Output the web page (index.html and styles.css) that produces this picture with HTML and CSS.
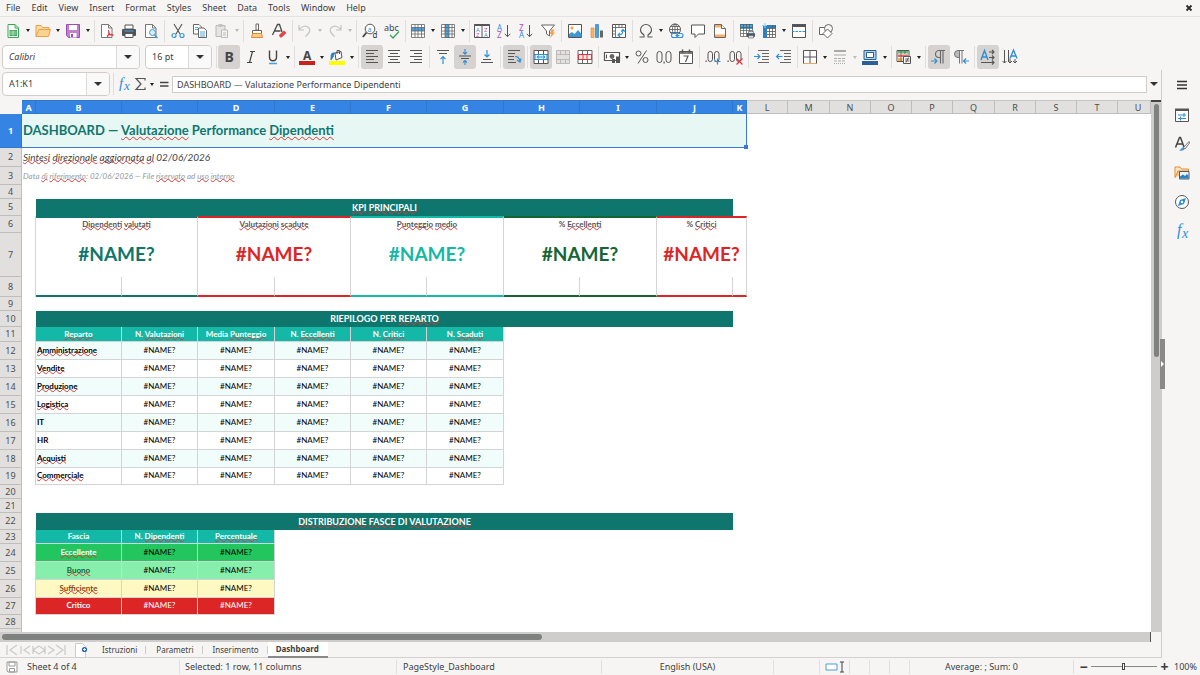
FILE: index.html
```html
<!DOCTYPE html>
<html lang="en">
<head>
<meta charset="utf-8">
<title>Dashboard</title>
<link rel="stylesheet" href="styles.css">
</head>
<body>
<nav class="menubar">
<button>File</button><button>Edit</button><button>View</button><button>Insert</button><button>Format</button><button>Styles</button><button>Sheet</button><button>Data</button><button>Tools</button><button>Window</button><button>Help</button>
<button class="close" aria-label="Close"><svg class="x" viewBox="0 0 8 8"><path d="M1.500 1.500l5 5M6.500 1.500l-5 5" stroke="#2b2b2b" stroke-width="1.800"/></svg></button>
</nav>

<div class="toolbar">
<button class="tb" aria-label="New"><svg viewBox="0 0 16 16"><path d="M3 1.500h7l3.500 3.500v9.500H3z" fill="#fff" stroke="#3aa655"/><path d="M10 1.500v3.500h3.500" fill="none" stroke="#3aa655"/><path d="M4.500 7h7.500v6H4.500z" fill="#43a85a"/><path d="M5 9h6.500M5 11h6.500M8 7.500v5" stroke="#d6f0dc" stroke-width=".7"/></svg></button><button class="dd" aria-label="New options"></button>
<button class="tb" aria-label="Open"><svg viewBox="0 0 16 16"><path d="M1 13.500V2.500h5l1.500 2H14v2" fill="#fbdba4" stroke="#e9a04a"/><path d="M1 13.500L4 6.500h11.500l-2 7z" fill="#fbd38f" stroke="#e9a04a"/></svg></button><button class="dd" aria-label="Open options"></button>
<button class="tb" aria-label="Save"><svg viewBox="0 0 16 16"><path d="M1.500 1.500h13v13H3.500l-2-2z" fill="#c27fd0" stroke="#9a4fae"/><path d="M4 2h8v5H4zM5 10h6.500v4.500H5z" fill="#fff"/><path d="M6 11h2v3H6z" fill="#9a4fae"/></svg></button><button class="dd" aria-label="Save options"></button>
<i class="sep tight"></i>
<button class="tb" aria-label="Export as PDF"><svg viewBox="0 0 16 16"><path d="M2.500 1.500h7l3.500 3.500v9.500H2.500z" fill="#fff" stroke="#777"/><path d="M9.500 1.500V5H13" fill="none" stroke="#777"/><path d="M9.500 7c1 3 .5 5-1.500 7.500M9.500 9c1 3 3 3.500 5 3M8 13c2-1.500 4-2 6.500-1" fill="none" stroke="#d9363e" stroke-width="1.100"/></svg></button>
<button class="tb" aria-label="Print"><svg viewBox="0 0 16 16"><path d="M4 2h8v4H4z" fill="#fff" stroke="#555"/><rect x="1" y="6" width="14" height="7" rx="1" fill="#515558"/><path d="M4 10.500h8v4H4z" fill="#fff" stroke="#555"/><path d="M3.500 8h9" stroke="#4d9fd8"/></svg></button>
<button class="tb" aria-label="Print preview"><svg viewBox="0 0 16 16"><path d="M2.500 1.500h7l3.500 3.500v9.500H2.500z" fill="#fff" stroke="#777"/><path d="M9.500 1.500V5H13" fill="none" stroke="#777"/><circle cx="9.500" cy="9.500" r="3" fill="#d9edfb" stroke="#3f97d6"/><path d="M11.500 12l3 3" stroke="#3f97d6" stroke-width="1.400"/></svg></button>
<i class="sep"></i>
<button class="tb" aria-label="Cut"><svg viewBox="0 0 16 16"><path d="M4 1l6 10M12 1L6 11" stroke="#555" stroke-width="1.100"/><circle cx="4" cy="12.500" r="2" fill="none" stroke="#3f97d6" stroke-width="1.200"/><circle cx="12" cy="12.500" r="2" fill="none" stroke="#3f97d6" stroke-width="1.200"/></svg></button>
<button class="tb" aria-label="Copy"><svg viewBox="0 0 16 16"><path d="M1.500 1.500h5.500l2.500 2.500v7h-8z" fill="#fff" stroke="#666"/><path d="M6.500 5h5.500l2.500 2.500v7h-8z" fill="#fff" stroke="#666"/><path d="M3 4.500h3M3 6.500h3M8 9h5M8 11h5M8 13h5" stroke="#5aa9e0"/></svg></button>
<button class="tb" aria-label="Paste"><svg viewBox="0 0 16 16"><path d="M2 2.500h9v11H2z" fill="#e5e4e2" stroke="#b9b8b6"/><path d="M4.500 1h4v3h-4z" fill="#c4c3c1"/><path d="M7.500 7h6v7.500h-6z" fill="#f4f4f3" stroke="#bbb"/><path d="M9 10h3M9 12h3" stroke="#bbb"/></svg></button><button class="dd off" aria-label="Paste options"></button>
<i class="sep"></i>
<button class="tb" aria-label="Clone formatting"><svg viewBox="0 0 16 16"><path d="M7 1h2.500v6H7z" fill="#fff" stroke="#666"/><path d="M3.500 7.500h9v3h-9z" fill="#fff" stroke="#666"/><path d="M3.500 10.500h9l1 4h-11z" fill="#f7c98a" stroke="#e28b2c"/></svg></button>
<button class="tb" aria-label="Clear formatting"><svg viewBox="0 0 16 16"><path d="M1.500 12L6.500 1.500h2L11 9M3.500 8h6" fill="none" stroke="#4a4a4a" stroke-width="1.300"/><path d="M8 12l5-4.500 2.500 2.500-5 4.500H9z" fill="#e0444c"/></svg></button>
<i class="sep tight"></i>
<button class="tb" aria-label="Undo"><svg viewBox="0 0 16 16"><path d="M2 2v5h5M2.500 6.500C5 3 9 2 11.500 4.500s1.500 5-3 9" fill="none" stroke="#c4c3c1" stroke-width="1.200"/></svg></button><button class="dd off" aria-label="Undo list"></button>
<button class="tb" aria-label="Redo"><svg viewBox="0 0 16 16"><path d="M14 2v5H9M13.500 6.500C11 3 7 2 4.500 4.500s-1.500 5 3 9" fill="none" stroke="#c4c3c1" stroke-width="1.200"/></svg></button><button class="dd off" aria-label="Redo list"></button>
<i class="sep"></i>
<button class="tb" aria-label="Find and replace"><svg viewBox="0 0 16 16"><circle cx="8" cy="6" r="4.800" fill="#fff" stroke="#555"/><path d="M4.500 9.500L.8 14" stroke="#444" stroke-width="1.800"/><text x="5.500" y="8.500" font-size="7" fill="#3f97d6">a</text><text x="10.500" y="15" font-size="8" fill="#333">d</text></svg></button>
<button class="tb" aria-label="Spelling"><svg viewBox="0 0 16 16"><text x="0" y="8" font-size="9" fill="#444">abc</text><path d="M6 12l3 3 6-6.500" fill="none" stroke="#3aa655" stroke-width="1.300"/></svg></button>
<i class="sep tight"></i>
<button class="tb" aria-label="Row"><svg viewBox="0 0 16 16"><path d="M1.500 1.500h13v13h-13z" fill="#fff"/><path d="M1 4.500h14v3.500H1z" fill="#4aa3df"/><path d="M1.500 1.500h13v13h-13zM1.500 4.500h13M1.500 8h13M1.500 11h13M5 1.500v13M8 1.500v13M11.500 1.500v13" fill="none" stroke="#666" stroke-width=".8"/></svg></button><button class="dd" aria-label="Row options"></button>
<button class="tb" aria-label="Column"><svg viewBox="0 0 16 16"><path d="M1.500 1.500h13v13h-13z" fill="#fff"/><path d="M5 1h4v14H5z" fill="#4aa3df"/><path d="M1.500 1.500h13v13h-13zM1.500 4.500h13M1.500 8h13M1.500 11h13M5 1.500v13M9 1.500v13M12 1.500v13" fill="none" stroke="#666" stroke-width=".8"/></svg></button><button class="dd" aria-label="Column options"></button>
<i class="sep tight"></i>
<button class="tb" aria-label="Sort"><svg viewBox="0 0 16 16"><path d="M.5 1.500h15v13H.5z" fill="#fff" stroke="#555"/><path d="M.5 1h15v2H.5zM7.500 3h1v11h-1z" fill="#555"/><text x="2" y="8.500" font-size="6" fill="#2e8fd8">A</text><text x="2" y="14" font-size="6" fill="#b04ec0">Z</text><text x="10" y="8.500" font-size="6" fill="#b04ec0">Z</text><text x="10" y="14" font-size="6" fill="#2e8fd8">A</text></svg></button>
<button class="tb" aria-label="Sort ascending"><svg viewBox="0 0 16 16"><text x="1" y="7.500" font-size="8" fill="#2e8fd8">A</text><text x="1" y="15" font-size="8" fill="#b04ec0">Z</text><path d="M11.500 2v11.500M8.800 10.800l2.700 2.900 2.700-2.900" fill="none" stroke="#555"/></svg></button>
<button class="tb" aria-label="Sort descending"><svg viewBox="0 0 16 16"><text x="1" y="7.500" font-size="8" fill="#b04ec0">Z</text><text x="1" y="15" font-size="8" fill="#2e8fd8">A</text><path d="M11.500 2v11.500M8.800 10.800l2.700 2.900 2.700-2.900" fill="none" stroke="#555"/></svg></button>
<button class="tb" aria-label="AutoFilter"><svg viewBox="0 0 16 16"><path d="M1.500 2h13L9.500 8v5l-3-2V8z" fill="#fff" stroke="#666"/><path d="M11.500 6.500h3l-1.500 3h2l-5 6 1.500-4.500H9.500z" fill="#f3a24c"/></svg></button>
<i class="sep"></i>
<button class="tb" aria-label="Image"><svg viewBox="0 0 16 16"><path d="M1.500 1.500h13v13h-13z" fill="#fff" stroke="#555"/><circle cx="5" cy="5" r="1.500" fill="#f3a24c"/><path d="M2 14v-3l3-2 2.500 2L11 7l3.500 4v3z" fill="#3f97d6"/></svg></button>
<button class="tb" aria-label="Chart"><svg viewBox="0 0 16 16"><path d="M2 5h3v9.500H2z" fill="#f7b76b" stroke="#e28b2c" stroke-width=".7"/><path d="M6.500 1.500h3v13h-3z" fill="#4aa3df" stroke="#2e7fc0" stroke-width=".7"/><path d="M11 7.500h3v7h-3z" fill="#666"/></svg></button>
<button class="tb" aria-label="Pivot table"><svg viewBox="0 0 16 16"><path d="M1.500 1.500h13v13h-13z" fill="#fff" stroke="#555"/><path d="M1.500 4.500h13M4.500 1.500v13M8 1.500v3M11 1.500v3M1.500 8h3M1.500 11h3" stroke="#666" stroke-width=".9"/><path d="M7 12c4 0 5-1 5-5.500M10 8.500l2-2 2 2M9 10l-2 2 2 2" fill="none" stroke="#2e8fd8" stroke-width="1.100"/></svg></button>
<i class="sep"></i>
<button class="tb" aria-label="Special character"><svg viewBox="0 0 16 16"><path d="M1.500 14h4.500v-2C3.500 10.500 2.500 9 2.500 7a5.500 5.500 0 0 1 11 0c0 2-1 3.500-3.500 5v2h4.500" fill="none" stroke="#555" stroke-width="1.100"/></svg></button><button class="dd" aria-label="Special character options"></button>
<button class="tb" aria-label="Hyperlink"><svg viewBox="0 0 16 16"><circle cx="7" cy="6.500" r="5.500" fill="#fff" stroke="#555"/><path d="M1.500 6.500h11M7 1v11M2.500 3.500h9M2.500 9.500h9" stroke="#555" stroke-width=".8"/><ellipse cx="7" cy="6.500" rx="2.600" ry="5.500" fill="none" stroke="#555" stroke-width=".8"/><rect x="3.500" y="10.500" width="6" height="4" rx="2" fill="#fff" stroke="#2e8fd8" stroke-width="1.100"/><rect x="9" y="10.500" width="6" height="4" rx="2" fill="#fff" stroke="#2e8fd8" stroke-width="1.100"/><path d="M7.500 12.500h4" stroke="#2e8fd8"/></svg></button>
<button class="tb" aria-label="Comment"><svg viewBox="0 0 16 16"><path d="M1.500 2h13v9H8.500L5 14.500V11H1.500z" fill="#fff" stroke="#555"/></svg></button>
<button class="tb" aria-label="Headers and footers"><svg viewBox="0 0 16 16"><path d="M2.500 1.500h7l4 4v9h-11z" fill="#fff" stroke="#666"/><path d="M3 2h6.500v2.500H3zM3 11.500h10V14H3z" fill="#f3b065"/><path d="M9.500 1.500v4h4" fill="#fff" stroke="#666"/></svg></button>
<i class="sep"></i>
<button class="tb" aria-label="Print area"><svg viewBox="0 0 16 16"><path d="M1.500 1.500h12v12h-12z" fill="#fff"/><path d="M1 1h13v5H1z" fill="#4aa3df"/><path d="M1.500 1.500h12v12h-12zM1.500 4.500h12M1.500 7.500h12M1.500 10.500h12M4.500 1.500v12M7.500 1.500v12M10.500 1.500v12" fill="none" stroke="#555" stroke-width=".7"/><rect x="8" y="10" width="8" height="4" rx="1" fill="#50565c"/><path d="M9.500 8.500h5v2h-5zM9.500 12.500h5v2.500h-5z" fill="#cfe6f7" stroke="#555" stroke-width=".6"/></svg></button>
<button class="tb" aria-label="Freeze"><svg viewBox="0 0 16 16"><path d="M2.500 2.500h12v12h-12z" fill="#fff"/><path d="M2 2h13v3H2zM2 2h4v13H2z" fill="#2e7fc0"/><path d="M6 5.500h8.500M6 8.500h8.500M6 11.500h8.500M6 14.500h8.500M8.500 5v9.500M11.500 2.500v12M14.500 2.500v12" stroke="#555" stroke-width=".8"/><path d="M4 0v5M1 2.500h5" stroke="#8fd0f7" stroke-width="1"/></svg></button><button class="dd" aria-label="Freeze options"></button>
<button class="tb" aria-label="Split window"><svg viewBox="0 0 16 16"><path d="M1.500 1.500h13v13h-13z" fill="#fff" stroke="#555"/><path d="M1 1h14v3H1z" fill="#555"/><path d="M1 8.500h14" stroke="#2e8fd8" stroke-dasharray="2.500 1"/></svg></button>
<i class="sep"></i>
<button class="tb" aria-label="Draw functions"><svg viewBox="0 0 16 16"><path d="M1.500 4.500h7v7h-7z" fill="#fff" stroke="#666"/><circle cx="10.500" cy="5.500" r="4" fill="#f6f5f4" stroke="#666"/><path d="M9.500 6l4.500 4.500-4.500 4.500L5 10.500z" fill="#fff" stroke="#666"/></svg></button>
</div>

<div class="toolbar format">
<div class="combo font"><input class="ital" aria-label="Font name" value="Calibri"><button class="drop" aria-label="Font list"></button></div>
<div class="combo size"><input aria-label="Font size" value="16 pt"><button class="drop" aria-label="Size list"></button></div>
<i class="sep tight"></i>
<button class="tb on" aria-label="Bold"><svg viewBox="0 0 16 16"><text x="3.500" y="13" font-size="14" font-weight="bold" fill="#444">B</text></svg></button>
<button class="tb" aria-label="Italic"><svg viewBox="0 0 16 16"><path d="M7 2.500h5M4 13.500h5M9.500 2.500l-3 11" stroke="#444" stroke-width="1.200"/></svg></button>
<button class="tb" aria-label="Underline"><svg viewBox="0 0 16 16"><path d="M4.500 1.500v6.500c0 5 7 5 7 0V1.500" fill="none" stroke="#444" stroke-width="1.400"/><path d="M4 14.500h8" stroke="#4aa3df" stroke-width="1.500"/></svg></button><button class="dd" aria-label="Underline options"></button>
<i class="sep tight"></i>
<button class="tb" aria-label="Font color"><svg viewBox="0 0 16 16"><text x="4" y="11" font-size="12" font-weight="bold" fill="#444">A</text><path d="M0 12h16v4H0z" fill="#c9211e"/></svg></button><button class="dd" aria-label="Font color options"></button>
<button class="tb" aria-label="Background color"><svg viewBox="0 0 16 16"><path d="M6 4l6-1.500 1 6-6 2.500z" fill="#fff" stroke="#555"/><path d="M8 5V1.500h2.500V5" fill="none" stroke="#555"/><path d="M6 4H3.500C2 5 2 7 2 11l2.500-4" fill="#2e7fc0" stroke="#2e7fc0"/><path d="M0 12h16v4H0z" fill="#ff0"/></svg></button><button class="dd" aria-label="Background color options"></button>
<i class="sep"></i>
<button class="tb on" aria-label="Align left"><svg viewBox="0 0 16 16"><path d="M2 1.500h12M2 4.500h8M2 7.500h12M2 10.500h8M2 13.500h12" stroke="#555"/></svg></button>
<button class="tb" aria-label="Center"><svg viewBox="0 0 16 16"><path d="M2 1.500h12M4 4.500h8M2 7.500h12M4 10.500h8M2 13.500h12" stroke="#555"/></svg></button>
<button class="tb" aria-label="Align right"><svg viewBox="0 0 16 16"><path d="M2 1.500h12M6 4.500h8M2 7.500h12M6 10.500h8M2 13.500h12" stroke="#555"/></svg></button>
<i class="sep"></i>
<button class="tb" aria-label="Align top"><svg viewBox="0 0 16 16"><path d="M2 1.500h12M4 4.500h8" stroke="#555"/><path d="M8 15V8M5.500 10.200L8 7.700l2.500 2.500" fill="none" stroke="#2e8fd8" stroke-width="1.200"/></svg></button>
<button class="tb on" aria-label="Center vertically"><svg viewBox="0 0 16 16"><path d="M2 7h12M4 9.500h8" stroke="#555"/><path d="M8 0v5M6 3.200l2 2 2-2M8 16v-4.500M6 13.500l2-2 2 2" fill="none" stroke="#2e8fd8" stroke-width="1.100"/></svg></button>
<button class="tb" aria-label="Align bottom"><svg viewBox="0 0 16 16"><path d="M4 10.500h8M2 13.500h12" stroke="#555"/><path d="M8 1v7M5.500 5.500L8 8l2.500-2.500" fill="none" stroke="#2e8fd8" stroke-width="1.200"/></svg></button>
<i class="sep"></i>
<button class="tb on" aria-label="Wrap text"><svg viewBox="0 0 16 16"><path d="M2 1.500h12M2 4.500h7M2 7.500h6M2 10.500h6M2 13.500h8" stroke="#555"/><path d="M9 7.500c3 0 4 1 5 5M11 11l3 2 1-3.500" fill="none" stroke="#2e8fd8" stroke-width="1.200"/></svg></button>
<i class="sep"></i>
<button class="tb on" aria-label="Merge and center"><svg viewBox="0 0 16 16"><path d="M1 1.500h14v13H1zM1 5.500h14M1 10.500h14M5.500 1.500v4M10.500 1.500v4M5.500 10.500v4M10.500 10.500v4" fill="#fff" stroke="#555"/><path d="M2 5.500h12v5H2z" fill="#e3f2fc" stroke="#2e8fd8"/><path d="M4 8h8M6 6.500L4 8l2 1.500M10 6.500L12 8l-2 1.500" fill="none" stroke="#2e8fd8"/></svg></button>
<button class="tb" aria-label="Merge cells"><svg viewBox="0 0 16 16"><path d="M1.500 1.500h13v13h-13zM1.500 5.500h13M1.500 10.500h13M5.500 1.500v4M10.500 1.500v4M5.500 10.500v4M10.500 10.500v4" fill="#e2e1df" stroke="#bbbab8"/></svg></button>
<button class="tb" aria-label="Unmerge cells"><svg viewBox="0 0 16 16"><path d="M1 1.500h14v13H1zM1 5.500h14M1 10.500h14M5.500 1.500v4M10.500 1.500v4M5.500 10.500v4M10.500 10.500v4" fill="#fff" stroke="#666"/><path d="M1.500 5.500h13v5h-13zM6 5.500v5M10 5.500v5" fill="#fdeaea" stroke="#d9363e"/></svg></button>
<i class="sep"></i>
<button class="tb" aria-label="Currency"><svg viewBox="0 0 16 16"><path d="M.5 3.500h15v8H.5z" fill="#fff" stroke="#555" stroke-width="1.200"/><circle cx="8" cy="7.500" r="2.400" fill="#666"/><path d="M8 10h3v4H8zM12 7.500h4V14h-4z" fill="#555"/><path d="M2.500 5.500v4" stroke="#555"/></svg></button><button class="dd" aria-label="Currency options"></button>
<button class="tb" aria-label="Percent"><svg viewBox="0 0 16 16"><circle cx="4.500" cy="4.500" r="2.500" fill="none" stroke="#555"/><circle cx="11.500" cy="11" r="2.500" fill="none" stroke="#555"/><path d="M12.500 1.500L4 14.500" stroke="#555"/></svg></button>
<button class="tb" aria-label="Number"><svg viewBox="0 0 16 16"><rect x="1" y="2.500" width="5" height="11" rx="2.500" fill="none" stroke="#555"/><rect x="10" y="2.500" width="5" height="11" rx="2.500" fill="none" stroke="#555"/><path d="M7.500 12.500h1.200v2H7.500z" fill="#555"/></svg></button>
<button class="tb" aria-label="Date"><svg viewBox="0 0 16 16"><path d="M1.500 2.500h13v12h-13z" fill="#fff" stroke="#555"/><path d="M1 4h14M4.500.5v3M11.500.5v3" stroke="#555" stroke-width="1.500"/><path d="M5.500 7H10l-2.500 6" fill="none" stroke="#555" stroke-width="1.200"/></svg></button>
<i class="sep"></i>
<button class="tb" aria-label="Add decimal place"><svg viewBox="0 0 16 16"><rect x="3" y="2.500" width="4.500" height="10" rx="2.200" fill="none" stroke="#555"/><rect x="9.500" y="2.500" width="4.500" height="10" rx="2.200" fill="none" stroke="#555"/><path d="M.5 11.500h1.200v1.500H.5z" fill="#555"/><path d="M9.500 12.500h6M12.500 9.500v6" stroke="#2e8fd8" stroke-width="1.200"/></svg></button>
<button class="tb" aria-label="Delete decimal place"><svg viewBox="0 0 16 16"><rect x="3" y="2.500" width="4.500" height="10" rx="2.200" fill="none" stroke="#555"/><rect x="9.500" y="2.500" width="4.500" height="10" rx="2.200" fill="none" stroke="#555"/><path d="M.5 11.500h1.200v1.500H.5z" fill="#555"/><path d="M9.500 9.500l6 6M15.500 9.500l-6 6" stroke="#d9363e" stroke-width="1.200"/></svg></button>
<i class="sep"></i>
<button class="tb" aria-label="Increase indent"><svg viewBox="0 0 16 16"><path d="M4 1.500h11M8 4.500h7M8 7.500h7M8 10.500h7M4 13.500h11" stroke="#666"/><path d="M0 7.500h6M3.500 5L6 7.500 3.500 10" fill="none" stroke="#2e8fd8" stroke-width="1.100"/></svg></button>
<button class="tb" aria-label="Decrease indent"><svg viewBox="0 0 16 16"><path d="M4 1.500h11M8 4.500h7M8 7.500h7M8 10.500h7M4 13.500h11" stroke="#666"/><path d="M6.500 7.500h-6M3 5L.5 7.500 3 10" fill="none" stroke="#2e8fd8" stroke-width="1.100"/></svg></button>
<i class="sep tight"></i>
<button class="tb" aria-label="Borders"><svg viewBox="0 0 16 16"><path d="M1.500 1.500h13v13h-13z" fill="#fff" stroke="#555"/><path d="M2 8h12M8 2v12" stroke="#555"/><path d="M1.500 14.500h13" stroke="#e8a860"/></svg></button><button class="dd" aria-label="Border options"></button>
<button class="tb" aria-label="Border style"><svg viewBox="0 0 16 16"><path d="M2 2h12" stroke="#aaa" stroke-width="2"/><path d="M2 6h12" stroke="#aaa"/><path d="M2 9.500h12M2 12h12" stroke="#aaa" stroke-dasharray="3 1"/><path d="M2 14.500h12" stroke="#aaa" stroke-dasharray="1 1"/></svg></button><button class="dd off" aria-label="Border style options"></button>
<button class="tb" aria-label="Border color"><svg viewBox="0 0 16 16"><path d="M2 1.500h12v9H2z" fill="#a9d2ef" stroke="#2e5f8a"/><path d="M4.500 3.500h7v5h-7z" fill="#fff" stroke="#2e5f8a"/><path d="M0 12h16v4H0z" fill="#2a6099"/></svg></button><button class="dd" aria-label="Border color options"></button>
<i class="sep tight"></i>
<button class="tb" aria-label="Conditional formatting"><svg viewBox="0 0 16 16"><path d="M1 1.500h12v11H1z" fill="#fff" stroke="#555"/><path d="M1.500 2h11v2.500h-11z" fill="#65bd75"/><path d="M1.500 5.500h11V8h-11z" fill="#e66a6a"/><path d="M1.500 9h5v3h-5z" fill="#f3b065"/><path d="M5 2v10M9 2v3" stroke="#555" stroke-width=".7"/><path d="M7.500 7.500h7v7h-7z" fill="#fff" stroke="#555"/><path d="M9 10h4.500M9 12h4.500M12.500 8.500l-2.500 5" stroke="#444" stroke-width=".8"/></svg></button><button class="dd" aria-label="Conditional options"></button>
<i class="sep"></i>
<button class="tb on" aria-label="Left to right"><svg viewBox="0 0 16 16"><path d="M14 1.500H8a3.500 3.500 0 0 0 0 7h1.500M9.500 1.500v13M12 1.500v13" fill="none" stroke="#666" stroke-width="1.100"/><path d="M0 12h6M3.500 9.500L6 12l-2.500 2.500" fill="none" stroke="#2e8fd8" stroke-width="1.200"/></svg></button>
<button class="tb" aria-label="Right to left"><svg viewBox="0 0 16 16"><path d="M6.500 1.500H5a3.500 3.500 0 0 0 0 7h1.500z" fill="#bbb"/><path d="M11 1.500H5a3.500 3.500 0 0 0 0 7h1.500M6.500 1.500v13M9 1.500v13" fill="none" stroke="#777"/><path d="M16 12h-5.500M13 9.500L10.500 12l2.500 2.500" fill="none" stroke="#2e8fd8" stroke-width="1.200"/></svg></button>
<i class="sep"></i>
<button class="tb on" aria-label="Text left to right"><svg viewBox="0 0 16 16"><path d="M1 11L4.500 1.500 8 11M2.200 8h4.600" fill="none" stroke="#2e8fd8" stroke-width="1.400"/><path d="M9 3h5M12 1l2 2-2 2M9 8.500h5M12 6.500l2 2-2 2M1 13.500h13M12 11.500l2 2-2 2" fill="none" stroke="#555" stroke-width="1.100"/></svg></button>
<button class="tb" aria-label="Text top to bottom"><svg viewBox="0 0 16 16"><path d="M8 9.500L11.500 1 15 9.500M9.300 7h4.400" fill="none" stroke="#2e8fd8" stroke-width="1.400"/><path d="M2.500 1v13M.5 12l2 2 2-2M8 10v4M6 12l2 2 2-2M13 10v4M11 12l2 2 2-2M6.500 1v11" fill="none" stroke="#555"/></svg></button>
</div>

<main class="work">
<section class="book">
<div class="formula">
<div class="combo name"><input aria-label="Name box" value="A1:K1"><button class="drop" aria-label="Name list"></button></div>
<i class="sep"></i>
<button class="fb" aria-label="Function wizard"><svg viewBox="0 0 16 16"><text class="fx" x="2" y="12" font-size="15">f</text><text class="fx" x="7" y="14" font-size="13">x</text></svg></button>
<button class="fb sig" aria-label="Select function"><svg viewBox="0 0 16 16"><path d="M12 4.500v-2H3L8 8l-5 5.500h9v-2" fill="none" stroke="#555" stroke-width="1.200"/></svg></button><button class="dd" aria-label="Function options"></button>
<button class="fb eq" aria-label="Formula"><svg viewBox="0 0 16 16"><path d="M4 6.500h8.500M4 10h8.500" stroke="#444" stroke-width="1.500"/></svg></button>
<input class="line" aria-label="Input line" value="DASHBOARD — Valutazione Performance Dipendenti">
<button class="expand" aria-label="Expand formula bar"></button>
</div>
<div class="gridrow">
<div class="sheet">
<table>
<colgroup><col class="w22"><col class="w14"><col class="w86"><col class="w76"><col class="w77"><col class="w76"><col class="w76"><col class="w77"><col class="w76"><col class="w77"><col class="w76"><col class="w14"><col class="w41"><col class="w42"><col class="w41"><col class="w41"><col class="w41"><col class="w42"><col class="w41"><col class="w41"><col class="w41"><col></colgroup>
<thead><tr class="h14"><td class="corner"></td><th class="sel">A</th><th class="sel">B</th><th class="sel">C</th><th class="sel">D</th><th class="sel">E</th><th class="sel">F</th><th class="sel">G</th><th class="sel">H</th><th class="sel">I</th><th class="sel">J</th><th class="sel">K</th><th>L</th><th>M</th><th>N</th><th>O</th><th>P</th><th>Q</th><th>R</th><th>S</th><th>T</th><th class="cut">U</th></tr></thead>
<tbody>
<tr class="h34"><th class="sel">1</th><td colspan="11" class="title">DASHBOARD — <u>Valutazione</u> Performance <u>Dipendenti</u><span class="handle"></span></td></tr>
<tr class="h19"><th>2</th><td colspan="11" class="sub"><u>Sintesi</u> <u>direzionale</u> <u>aggiornata</u> <u>al</u> 02/06/2026</td></tr>
<tr class="h18"><th>3</th><td colspan="11" class="note">Data <u>di</u> <u>riferimento</u>: 02/06/2026 — File <u>riservato</u> ad <u>uso</u> <u>interno</u></td></tr>
<tr class="h14"><th>4</th></tr>
<tr class="h17"><th>5</th><td></td><td colspan="9" class="band"><u>KPI</u> <u>PRINCIPALI</u></td></tr>
<tr class="h17 lab"><th>6</th><td class="edge"></td><td colspan="2" class="k teal"><u>Dipendenti</u> <u>valutati</u></td><td colspan="2" class="k red"><u>Valutazioni</u> <u>scadute</u></td><td colspan="2" class="k aqua"><u>Punteggio</u> <u>medio</u></td><td colspan="2" class="k green">% <u>Eccellenti</u></td><td colspan="2" class="k red">% <u>Critici</u></td></tr>
<tr class="h44 big"><th>7</th><td class="edge"></td><td colspan="2" class="teal">#NAME?</td><td colspan="2" class="red">#NAME?</td><td colspan="2" class="aqua">#NAME?</td><td colspan="2" class="green">#NAME?</td><td colspan="2" class="red">#NAME?</td></tr>
<tr class="h20 foot"><th>8</th><td class="edge"></td><td class="teal"></td><td class="teal"></td><td class="red"></td><td class="red"></td><td class="aqua"></td><td class="aqua"></td><td class="green"></td><td class="green"></td><td class="red"></td><td class="red"></td></tr>
<tr class="h14"><th>9</th></tr>
<tr class="h16"><th>10</th><td></td><td colspan="9" class="band">RIEPILOGO PER <u>REPARTO</u></td></tr>
<tr class="h15 head"><th>11</th><td class="edge"></td><td><u>Reparto</u></td><td>N. <u>Valutazioni</u></td><td>Media <u>Punteggio</u></td><td>N. <u>Eccellenti</u></td><td>N. <u>Critici</u></td><td>N. <u>Scaduti</u></td></tr>
<tr class="h18 data tint"><th>12</th><td class="edge"></td><td><u>Amministrazione</u></td><td>#NAME?</td><td>#NAME?</td><td>#NAME?</td><td>#NAME?</td><td>#NAME?</td></tr>
<tr class="h18 data"><th>13</th><td class="edge"></td><td><u>Vendite</u></td><td>#NAME?</td><td>#NAME?</td><td>#NAME?</td><td>#NAME?</td><td>#NAME?</td></tr>
<tr class="h18 data tint"><th>14</th><td class="edge"></td><td><u>Produzione</u></td><td>#NAME?</td><td>#NAME?</td><td>#NAME?</td><td>#NAME?</td><td>#NAME?</td></tr>
<tr class="h18 data"><th>15</th><td class="edge"></td><td><u>Logistica</u></td><td>#NAME?</td><td>#NAME?</td><td>#NAME?</td><td>#NAME?</td><td>#NAME?</td></tr>
<tr class="h18 data tint"><th>16</th><td class="edge"></td><td>IT</td><td>#NAME?</td><td>#NAME?</td><td>#NAME?</td><td>#NAME?</td><td>#NAME?</td></tr>
<tr class="h18 data"><th>17</th><td class="edge"></td><td>HR</td><td>#NAME?</td><td>#NAME?</td><td>#NAME?</td><td>#NAME?</td><td>#NAME?</td></tr>
<tr class="h18 data tint"><th>18</th><td class="edge"></td><td><u>Acquisti</u></td><td>#NAME?</td><td>#NAME?</td><td>#NAME?</td><td>#NAME?</td><td>#NAME?</td></tr>
<tr class="h17 data"><th>19</th><td class="edge"></td><td><u>Commerciale</u></td><td>#NAME?</td><td>#NAME?</td><td>#NAME?</td><td>#NAME?</td><td>#NAME?</td></tr>
<tr class="h14"><th>20</th></tr>
<tr class="h14"><th>21</th></tr>
<tr class="h17"><th>22</th><td></td><td colspan="9" class="band"><u>DISTRIBUZIONE</u> <u>FASCE</u> DI <u>VALUTAZIONE</u></td></tr>
<tr class="h14 head"><th>23</th><td class="edge"></td><td>Fascia</td><td>N. <u>Dipendenti</u></td><td><u>Percentuale</u></td></tr>
<tr class="h18 tier best"><th>24</th><td class="edge"></td><td><u>Eccellente</u></td><td>#NAME?</td><td>#NAME?</td></tr>
<tr class="h18 tier good"><th>25</th><td class="edge"></td><td><u>Buono</u></td><td>#NAME?</td><td>#NAME?</td></tr>
<tr class="h18 tier fair"><th>26</th><td class="edge"></td><td><u>Sufficiente</u></td><td>#NAME?</td><td>#NAME?</td></tr>
<tr class="h17 tier poor"><th>27</th><td class="edge"></td><td>Critico</td><td>#NAME?</td><td>#NAME?</td></tr>
<tr class="h14"><th>28</th></tr>
<tr class="h14"><th></th></tr>
</tbody>
</table>
</div>
<div class="vbar"><div class="vthumb"></div></div>
</div>
<div class="hbar"><div class="hthumb"></div></div>
<div class="tabs">
<svg class="navs" viewBox="0 0 62 14"><path d="M2 2v10M12 2L5 7l7 5M16 3v8M25 3l-6 4 6 4M34 3l-6 4 6 4M28 3v8M34 3l6 4-6 4M40 3v8M43 3l6 4-6 4M51 2l7 5-7 5M60 2v10" fill="none" stroke="#cbcac8" stroke-width="1.200"/></svg>
<button class="add" aria-label="Add sheet"><svg viewBox="0 0 14 16"><path d="M1.500 1.500h7l3 3v11h-10z" fill="#fff" stroke="#ccc"/><circle cx="10.500" cy="7.500" r="2.600" fill="#2a66b8"/><path d="M9 7.500h3M10.500 6v3" stroke="#fff" stroke-width=".8"/></svg></button>
<button class="tab">Istruzioni</button><button class="tab">Parametri</button><button class="tab">Inserimento</button><button class="tab cur">Dashboard</button>
</div>
</section>
<aside class="side">
<button aria-label="Sidebar settings"><svg viewBox="0 0 16 16"><path d="M3 3.500h10M3 7h10M3 10.500h10" stroke="#333" stroke-width="1.400"/></svg></button>
<button aria-label="Properties"><svg viewBox="0 0 16 16"><path d="M1.500 2.500h13v12h-13z" fill="#fff" stroke="#555"/><path d="M1 1.500h14v2.500H1z" fill="#555"/><path d="M4 8h8M10 6v4M4 11.500h8M6.500 9.500v4" stroke="#2e8fd8"/></svg></button>
<button aria-label="Styles"><svg viewBox="0 0 16 16"><path d="M1.500 11.500L5.500 1.500h1L10 11M3 8h6" fill="none" stroke="#444" stroke-width="1.500"/><path d="M15 5.500l-5.500 6 1.500 1.500 4.500-6z" fill="#fff" stroke="#555" stroke-width=".8"/><path d="M9.500 11c2 1 1.500 4-4.500 4 2-1 2-3.500 4.500-4z" fill="#3f97d6"/></svg></button>
<button aria-label="Gallery"><svg viewBox="0 0 16 16"><path d="M1 12.500V2h5l1.500 2h7v3" fill="#fde6c4" stroke="#e58b35"/><path d="M1 12.500L4 6h11" fill="#f9c887" stroke="#e58b35"/><path d="M5.500 6.500h9.500v7.500H5.500z" fill="#e8f4fc" stroke="#4a5a68"/><path d="M6 13.500v-2l3-2 2 1.500L13 9l1.500 2v2.500z" fill="#2e7fc0"/></svg></button>
<button aria-label="Navigator"><svg viewBox="0 0 16 16"><circle cx="8" cy="8" r="6.500" fill="#fff" stroke="#555"/><path d="M12 4l-2 6-6 2 2-6z" fill="#2e8fd8"/><circle cx="8" cy="8" r="1.200" fill="#fff"/></svg></button>
<button aria-label="Functions"><svg viewBox="0 0 16 16"><text class="fx" x="3" y="12" font-size="16">f</text><text class="fx" x="8" y="15" font-size="14">x</text></svg></button>
<span class="grip"></span>
</aside>
</main>

<footer class="status">
<svg class="disk" viewBox="0 0 12 12"><path d="M1 1h10v10H2L1 10zM3 1h6v4H3zM3.500 7.500h5V11h-5z" fill="#fff" stroke="#999"/></svg>
<span class="s1">Sheet 4 of 4</span><span class="s2">Selected: 1 row, 11 columns</span><span class="s3">PageStyle_Dashboard</span><span class="s4">English (USA)</span><span class="s5"></span><span class="s6"><svg viewBox="0 0 20 12"><path d="M1 3h11v6H1z" fill="#fff" stroke="#4a9fd0"/><path d="M15 1h4M15 11h4M17 1v10" stroke="#444"/></svg></span><span class="s7"></span><span class="s7"></span><span class="s7"></span><span class="s8">Average: ; Sum: 0</span>
<div class="zoom"><button aria-label="Zoom out">−</button><input type="range" aria-label="Zoom" min="0" max="100" value="49"><button aria-label="Zoom in">+</button></div>
<button class="pct">100%</button>
</footer>
</body>
</html>
```
FILE: styles.css
```css
* { box-sizing: border-box; }
body {
  margin: 0;
  height: 100vh;
  display: flex;
  flex-direction: column;
  background: #f6f5f4;
  color: #3d3d3d;
  font: 9px/12px "Noto Sans", sans-serif;
  overflow: hidden;
}
button { border: 0; background: none; padding: 0; margin: 0; font: inherit; color: inherit; }
input { font: inherit; color: inherit; margin: 0; min-width: 0; }
svg { display: block; overflow: visible; }
svg text { font-family: "Noto Sans", sans-serif; }
svg .fx { font-family: "Liberation Serif", serif; font-style: italic; fill: #2e8fd8; }

.menubar { height: 17px; flex: none; display: flex; align-items: center; gap: 11px; padding: 0 7px 0 6px; border-bottom: 1px solid #e6e4e3; }
.close { margin-left: auto; }
.x { width: 8px; height: 8px; }

.toolbar { height: 27px; flex: none; display: flex; align-items: center; padding-left: 2px; }
.format { height: 26px; }
.tb { width: 22px; height: 24px; flex: none; display: flex; align-items: center; justify-content: center; border-radius: 3px; }
.tb svg, .fb svg, .side svg { width: 16px; height: 16px; }
.tb.on { background: #d5d2cf; }
.sep { width: 5px; height: 22px; flex: none; background: linear-gradient(#e0dedc, #e0dedc) center / 1px 100% no-repeat; }
.sep.tight { width: 4px; }
.dd, .drop, .expand { display: flex; align-items: center; justify-content: center; flex: none; }
.dd { width: 8px; height: 22px; }
.dd::after { content: ""; border: 2px solid transparent; border-top: 3px solid #222; border-bottom: 0; }
.dd.off::after { border-top-color: #bbb; }
.drop::after, .expand::after { content: ""; border: 4px solid transparent; border-top-color: #333; border-bottom: 0; }
.combo { display: flex; flex: none; height: 24px; border: 1px solid #d0cdca; border-radius: 4px; background: #fff; overflow: hidden; }
.combo input { flex: 1; border: 0; padding: 0 6px; background: none; outline: 0; }
.combo .drop { width: 23px; border-left: 1px solid #dcdad8; background: #faf9f9; }
.combo .ital { font-style: italic; }
.font { width: 138px; margin-right: 5px; }
.size { width: 67px; margin-right: 2px; }

.work { flex: 1; min-height: 0; display: flex; }
.book { flex: 1; min-width: 0; display: flex; flex-direction: column; border-right: 1px solid #cfcdcb; }
.formula { height: 30px; flex: none; display: flex; align-items: center; padding: 0 0 2px 2px; }
.name { width: 108px; margin-right: 1px; }
.fb { width: 18px; flex: none; display: flex; justify-content: center; }
.fb.sig { width: 14px; }
.fb.eq { width: 16px; }
.line { flex: 1; height: 17px; border: 1px solid #d0cdca; background: #fff; padding: 0 4px; outline: 0; }
.expand { width: 14px; height: 17px; }

.gridrow { flex: 1; min-height: 0; display: flex; }
.sheet { flex: 1; min-width: 0; background: #fff; overflow: hidden; }
table { width: 100%; table-layout: fixed; border-collapse: separate; border-spacing: 0; font-family: Lato, sans-serif; font-size: 8px; line-height: 11px; }
.w14 { width: 14px; } .w22 { width: 22px; } .w41 { width: 41px; } .w42 { width: 42px; }
.w76 { width: 76px; } .w77 { width: 77px; } .w86 { width: 86px; }
.h14 { height: 14px; } .h15 { height: 15px; } .h16 { height: 16px; } .h17 { height: 17px; }
.h18 { height: 18px; } .h19 { height: 19px; } .h20 { height: 20px; } .h34 { height: 34px; } .h44 { height: 44px; }
th, td { padding: 0; white-space: nowrap; }
th { font: 9px/12px "Noto Sans", sans-serif; color: #4d4d4d; background: #e1e0df; border-right: 1px solid #bfbebd; border-bottom: 1px solid #bfbebd; }
thead th { border-top: 1px solid #c6c5c4; line-height: 11px; }
th.sel { background: #3584e4; color: #fff; font-weight: bold; border-color: #2f78d0; }
.cut { padding-left: 8px; }
.corner { background: #f6f5f4; }
u { text-decoration: underline wavy #e03535 1px; text-decoration-skip-ink: none; text-underline-offset: -1px; }
.title { position: relative; padding: 0 0 2px 1px; font-size: 13px; line-height: 18px; font-weight: bold; color: #0f766e; background: #e6f7f4; border-right: 1px solid #3a7bd0; border-bottom: 1px solid #3a7bd0; }
.title u { text-underline-offset: 1px; }
.handle { position: absolute; right: -2px; bottom: -2px; width: 4px; height: 4px; background: #3a7bd0; }
.sub { padding: 0 0 1px 1px; font-size: 10px; font-style: italic; color: #444; }
.note { padding-left: 1px; font-size: 8px; font-style: italic; color: #999; }
.band { padding-bottom: 1px; background: #0f766e; color: #fff; font-weight: bold; font-size: 9px; line-height: 13px; text-align: center; }
.edge { border-right: 1px solid #d4d4d4; }
.teal { color: #0f766e; } .red { color: #dc2626; } .aqua { color: #14b8a6; } .green { color: #166534; }
.lab .k { padding-bottom: 2px; border-top: 2px solid currentColor; border-right: 1px solid #d4d4d4; text-align: center; font-weight: bold; }
.k { -webkit-text-fill-color: #555; }
.big td { padding-bottom: 3px; font-size: 19px; line-height: 24px; font-weight: bold; text-align: center; border-right: 1px solid #d4d4d4; }
.foot td { border-right: 1px solid #d4d4d4; }
.foot .teal, .foot .red, .foot .aqua, .foot .green { border-bottom: 2px solid currentColor; border-right-color: #d4d4d4; }
.head td:not(.edge) { background: #14b8a6; color: #fff; font-weight: bold; text-align: center; border-right: 1px solid #d4d4d4; border-bottom: 1px solid #d4d4d4; }
.data td:not(.edge), .tier td:not(.edge) { padding-bottom: 1px; text-align: center; color: #000; border-right: 1px solid #d4d4d4; border-bottom: 1px solid #d4d4d4; }
.data td.edge + td { text-align: left; font-weight: bold; padding-left: 1px; }
.tint td:not(.edge) { background: #f0fdfa; }
.tier td.edge + td { font-weight: bold; }
.best td:not(.edge) { background: #22c55e; }
.good td:not(.edge) { background: #86efac; }
.fair td:not(.edge) { background: #fef9c3; }
.poor td:not(.edge) { background: #dc2626; color: #fff; }
.best td.edge + td { color: #fff; }
.good td.edge + td { color: #166534; }
.fair td.edge + td { color: #92400e; }

.vbar { width: 10px; flex: none; background: #cecdcc; border-top: 2px solid #444; padding: 2px 2px 0 3px; }
.vthumb { height: 48%; border-radius: 3px; background: #7f8180; }
.hbar { height: 10px; flex: none; margin-right: 10px; background: #cecdcc; padding: 2px 0 0 2px; border-right: 1px solid #555; }
.hthumb { width: 47%; height: 6px; border-radius: 3px; background: #7f8180; }
.tabs { height: 16px; flex: none; display: flex; align-items: center; padding-left: 5px; border-bottom: 1px solid #d4d2d0; font-size: 8px; }
.navs { width: 62px; height: 14px; flex: none; }
.add { width: 14px; margin: 0 4px 0 7px; }
.add svg { width: 14px; height: 16px; }
.tab { height: 16px; padding: 0 9px 0 10px; }
.tab:not(.cur) { background: linear-gradient(#cfcdcb, #cfcdcb) right / 1px 8px no-repeat; }
.tab.cur { background: #fff; font-weight: bold; border-bottom: 2px solid #8a8a8a; padding: 0 9px 0 8px; }

.side { position: relative; width: 38px; flex: none; display: flex; flex-direction: column; align-items: center; gap: 13px; padding: 8px 0 0 1px; }
.grip { position: absolute; left: -2px; top: 50%; width: 5px; height: 50px; margin-top: -25px; background: #8a8988; }
.grip::after { content: ""; position: absolute; left: 1px; top: 22px; border: 3px solid transparent; border-left-color: #fff; border-right: 0; }

.status { height: 17px; flex: none; display: flex; align-items: center; }
.status > span { height: 14px; line-height: 14px; border-right: 1px solid #e2e0de; white-space: nowrap; }
.disk { width: 12px; height: 12px; margin: 0 9px 0 6px; flex: none; }
.s1 { width: 153px; }
.s2 { width: 217px; padding-left: 5px; }
.s3 { width: 205px; padding-left: 6px; }
.s4 { flex: 1; text-align: center; }
.s5 { width: 46px; }
.s6 { width: 30px; padding: 1px 0 0 5px; }
.s6 svg { width: 20px; height: 12px; }
.s7 { width: 20px; }
.s8 { width: 184px; text-align: center; }
.s7 + .s8 { margin-left: -20px; }
.zoom { display: flex; align-items: center; gap: 3px; padding: 0 2px 0 5px; }
.zoom button { font-size: 14px; font-weight: bold; line-height: 12px; width: 9px; }
.zoom input { appearance: none; width: 66px; height: 12px; background: linear-gradient(#888, #888) center / 100% 1px no-repeat; }
.zoom input::-webkit-slider-thumb { appearance: none; width: 3px; height: 7px; background: #fff; border: 1px solid #444; }
.pct { width: 29px; }
```
